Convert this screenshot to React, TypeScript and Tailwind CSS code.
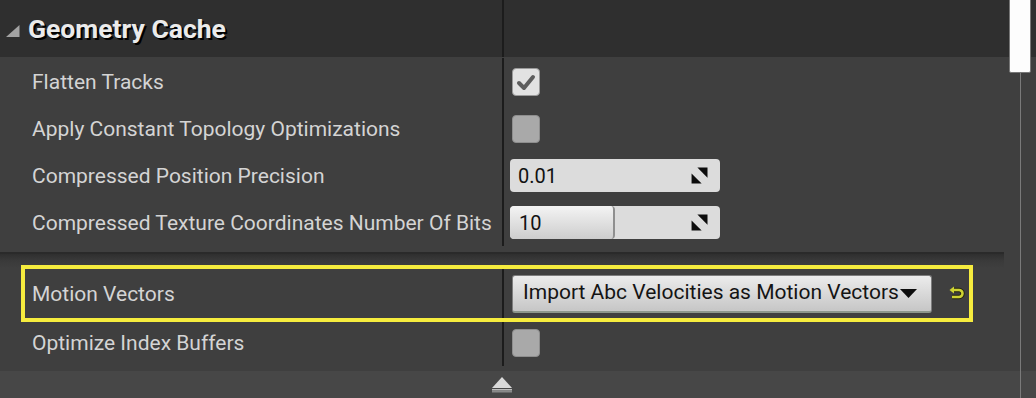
import { JSX } from 'react'

const font = "font-['Roboto',sans-serif]"

function SpinIcon(): JSX.Element {
	return (
		<svg width="17" height="17" viewBox="0 0 16 16" className="shrink-0">
			<polygon points="6,0.5 15.5,0.5 15.5,10" fill="#0d0d0d" />
			<polygon points="0.5,6 0.5,15.5 10,15.5" fill="#0d0d0d" />
		</svg>
	)
}

function CheckBox({ checked }: { checked?: boolean }): JSX.Element {
	if (checked) {
		return (
			<div className="ml-[8px] w-[28px] h-[28px] rounded-[4px] bg-[#e2e2e2] border border-[#9a9a9a] flex items-center justify-center">
				<svg width="22" height="22" viewBox="0 0 22 22">
					<path d="M4 12 L9 17 L18 6" fill="none" stroke="#5d5d5d" strokeWidth="4" strokeLinecap="round" strokeLinejoin="round" />
				</svg>
			</div>
		)
	}
	return <div className="ml-[8px] w-[28px] h-[28px] rounded-[4px] bg-[#a9a9a9] border border-[#8e8e8e]" />
}

function Row({ label, children, h = 'h-[47px]' }: { label: string, children?: React.ReactNode, h?: string }): JSX.Element {
	return (
		<div className={ `flex ${ h }` }>
			<div className="w-[502px] shrink-0 flex items-center pl-[32px] pt-[2px] text-[21px] text-[#d4d4d4] whitespace-nowrap">
				{ label }
			</div>
			<div className="flex-1 flex items-center border-l-2 border-[#1c1c1c]">
				{ children }
			</div>
		</div>
	)
}

export default function App(): JSX.Element {
	return (
		<div className={ `relative w-[1036px] h-[398px] overflow-hidden bg-[#3f3f3f] ${ font }` }>
			{/* header */}
			<div className="flex h-[57px] bg-[#2f2f2f]">
				<div className="w-[502px] shrink-0 flex items-center pl-[6px]">
					<svg width="14" height="12" viewBox="0 0 14 12" className="mt-[4px]">
						<polygon points="13.5,0 13.5,12 0,12" fill="#a3a3a3" />
					</svg>
					<span className="ml-[8px] text-[26.5px] font-bold text-[#ebebeb] [text-shadow:2px_2px_0_#000]">
						Geometry Cache
					</span>
				</div>
				<div className="flex-1 border-l-2 border-[#1c1c1c]" />
			</div>

			{/* first section */}
			<div className="pt-px pb-[6px]">
				<Row label="Flatten Tracks">
					<CheckBox checked />
				</Row>
				<Row label="Apply Constant Topology Optimizations">
					<CheckBox />
				</Row>
				<Row label="Compressed Position Precision">
					<div className="ml-[6px] w-[210px] h-[33px] rounded-[4px] bg-[#dcdcdc] flex items-center justify-between pl-[8px] pr-[12px] text-[20px] text-[#111]">
						<span>0.01</span>
						<SpinIcon />
					</div>
				</Row>
				<Row label="Compressed Texture Coordinates Number Of Bits">
					<div className="ml-[6px] w-[210px] h-[33px] rounded-[4px] bg-[#dcdcdc] relative flex items-center justify-between pr-[12px] text-[20px] text-[#111] overflow-hidden">
						<div className="absolute left-0 top-0 bottom-0 w-[105px] rounded-[4px] bg-gradient-to-b from-[#f4f4f4] to-[#cdcdcd] border-r-2 border-[#8f8f8f]" />
						<span className="relative pl-[9px]">10</span>
						<span className="relative"><SpinIcon /></span>
					</div>
				</Row>
			</div>

			{/* separator */}
			<div className="w-[1004px] h-[16px] border-t-2 border-[#2a2a2a] bg-gradient-to-b from-[#2f2f2f] via-[#3a3a3a] to-[#3f3f3f]" />

			{/* second section */}
			<div className="relative pb-[5px]">
				<Row label="Motion Vectors" h="h-[51px]">
					<div className="ml-[8px] w-[420px] h-[38px] rounded-[3px] bg-gradient-to-b from-[#ececec] to-[#c6c6c6] border border-[#7d7d7d] border-b-2 border-b-[#8c968c] flex items-center pl-[10px] pr-[6px] text-[21px] text-[#141414]">
						<span className="whitespace-nowrap">Import Abc Velocities as Motion Vectors</span>
						<svg width="17" height="9" viewBox="0 0 17 9" className="ml-[1px] mt-[1px]">
							<polygon points="0,0 17,0 8.5,9" fill="#0d0d0d" />
						</svg>
					</div>
					<svg width="17" height="15" viewBox="0 0 17 15" className="ml-[16px]">
						<path d="M5 4 H11 A3.5 3.5 0 0 1 14.5 7.5 A3.5 3.5 0 0 1 11 11 H4" fill="none" stroke="#22220f" strokeWidth="4.5" />
						<path d="M5 4 H11 A3.5 3.5 0 0 1 14.5 7.5 A3.5 3.5 0 0 1 11 11 H4" fill="none" stroke="#cdd232" strokeWidth="2.6" />
						<polygon points="1.5,4 6,0.5 6,7.5" fill="#cdd232" />
					</svg>
				</Row>
				<Row label="Optimize Index Buffers">
					<CheckBox />
				</Row>
				<div className="absolute left-[21px] top-[-3px] w-[952px] h-[57px] border-4 border-[#f6ec3e]" />
			</div>

			{/* bottom bar */}
			<div className="h-[27px] bg-[#474747] flex items-center pl-[492px]">
				<svg width="20" height="16" viewBox="0 0 20 16" className="mt-[1px]">
					<polygon points="10,0 20,11 0,11" fill="#d9d9d9" />
					<rect x="0" y="12" width="20" height="1.5" fill="#bdbdbd" />
					<rect x="0" y="13.5" width="20" height="2" fill="#8a8a8a" />
				</svg>
			</div>

			{/* scrollbar */}
			<div className="absolute left-[1020px] top-[73px] bottom-0 w-px bg-[#7a7a7a]" />
			<div className="absolute left-[1009px] top-[-2px] w-[22px] h-[75px] bg-[#fdfdfd] border border-[#777] rounded-b-[2px]" />
		</div>
	)
}
